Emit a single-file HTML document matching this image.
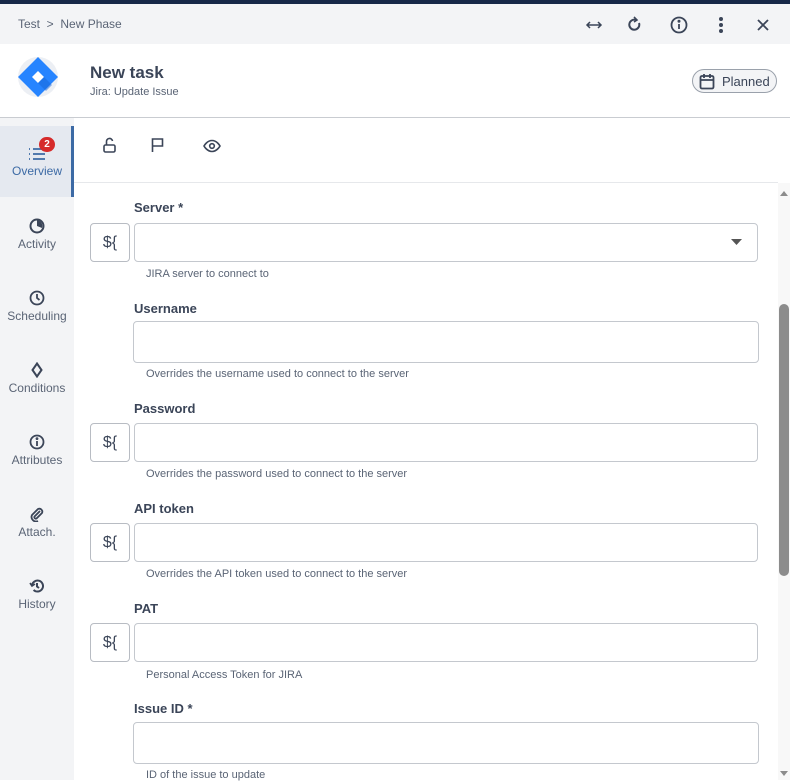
<!DOCTYPE html>
<html><head><style>
*{box-sizing:border-box;margin:0;padding:0}
body{width:790px;height:780px;overflow:hidden;font-family:"Liberation Sans",sans-serif;background:#fff;position:relative;color:#3b4558}
.a{position:absolute}
.top{left:0;top:0;width:790px;height:4px;background:#172848}
.bar{left:0;top:4px;width:790px;height:40px;background:#f3f4f6}
.crumb{left:18px;top:17px;font-size:12px;color:#5a6475}
.hdr{left:0;top:117px;width:790px;height:1px;background:#c9ccd1}
.side{left:0;top:118px;width:74px;height:662px;background:#f3f4f6}
.nav{position:absolute;left:0;width:74px;text-align:center;font-size:12px;color:#5a6475}
.nav svg{display:block;margin:0 auto 3px}
.lbl{position:absolute;left:134px;font-size:13px;font-weight:bold;color:#3b4558}
.inp{position:absolute;left:134px;width:624px;border:1px solid #c4c8ce;border-radius:4px;background:#fff}
.btn{position:absolute;left:90px;width:40px;height:39px;border:1px solid #b8bcc3;border-radius:4px;font-size:16px;text-align:center;line-height:37px;color:#3b4558}
.help{position:absolute;left:146px;font-size:11px;color:#5a6475}
</style></head><body>
<div class="a top"></div>
<div class="a bar"></div>
<div class="a crumb">Test&nbsp; &gt;&nbsp; New Phase</div>
<svg class="a" style="left:585px;top:17px" width="18" height="16" viewBox="0 0 18 16" fill="none" stroke="#3b4558" stroke-width="1.5"><path d="M2 8h14M5 5L2 8l3 3M13 5l3 3-3 3"/></svg>
<svg class="a" style="left:627px;top:16px" width="16" height="18" viewBox="0 0 16 18" fill="none" stroke="#3b4558" stroke-width="2"><path d="M12 7a5 5 0 1 1-3-3"/><path d="M7 1l3 3-3 2" stroke-width="1.6"/></svg>
<svg class="a" style="left:670px;top:16px" width="18" height="18" viewBox="0 0 18 18" fill="none" stroke="#3b4558" stroke-width="1.8"><circle cx="9" cy="9" r="7.5"/><path d="M9 8v5"/><circle cx="9" cy="5.3" r=".6" fill="#3b4558"/></svg>
<svg class="a" style="left:718px;top:16px" width="6" height="18"><circle cx="3" cy="3" r="2" fill="#3b4558"/><circle cx="3" cy="9" r="2" fill="#3b4558"/><circle cx="3" cy="15" r="2" fill="#3b4558"/></svg>
<svg class="a" style="left:757px;top:19px" width="12" height="12" stroke="#3b4558" stroke-width="1.8"><path d="M1 1l10 10M11 1L1 11"/></svg>
<div class="a" style="left:18px;top:57px;width:40px;height:40px;border-radius:50%;background:#eceff4"></div>
<svg class="a" style="left:18px;top:57px" width="40" height="40" viewBox="0 0 40 40"><path d="M20 0L40 20 20 40 0 20z" fill="#2684ff"/><path d="M20 14l6 6-6 6-6-6z" fill="#fff"/><path d="M20 26l6-6 8 8-6 6z" fill="#1565d8" opacity=".5"/></svg>
<div class="a" style="left:90px;top:63px;font-size:17px;font-weight:bold;color:#3b4558">New task</div>
<div class="a" style="left:90px;top:86px;font-size:11px;color:#5a6475">Jira: Update Issue</div>
<div class="a" style="left:692px;top:69px;width:85px;height:24px;border:1px solid #9aa1ab;border-radius:12px;background:#f3f4f6;font-size:13px;color:#3b4558;padding:4px 0 0 29px">Planned</div>
<svg class="a" style="left:699px;top:73px" width="16" height="17" viewBox="0 0 16 17" fill="none" stroke="#3b4558" stroke-width="1.8"><rect x="1.5" y="3" width="13" height="12.5" rx="1.5"/><path d="M1.5 7h13M5 1v4M11 1v4"/></svg>
<div class="a hdr"></div>
<div class="a side"></div>
<div class="a" style="left:0;top:126px;width:74px;height:71px;background:#e5e9f0;border-right:3px solid #3c6aa5"></div>
<div class="nav" style="top:147px;color:#3c6aa5"><svg width="18" height="14" viewBox="0 0 18 14" stroke="#3c6aa5" stroke-width="1.8"><path d="M5 2h12M5 7h12M5 12h12M1 2h1M1 7h1M1 12h1"/></svg>Overview</div>
<div class="a" style="left:39px;top:137px;width:16px;height:15px;border-radius:8px;background:#d62b2b;color:#fff;font-size:10px;font-weight:bold;text-align:center;line-height:15px">2</div>
<div class="nav" style="top:218px"><svg width="16" height="16" viewBox="0 0 16 16"><circle cx="8" cy="8" r="6.5" fill="none" stroke="#3b4558" stroke-width="2"/><path d="M8 8V2a6 6 0 0 1 5 8z" fill="#3b4558"/></svg>Activity</div>
<div class="nav" style="top:290px"><svg width="16" height="16" viewBox="0 0 16 16" fill="none" stroke="#3b4558" stroke-width="1.8"><circle cx="8" cy="8" r="6.5"/><path d="M8 4v4l2.5 2"/></svg>Scheduling</div>
<div class="nav" style="top:362px"><svg width="14" height="16" viewBox="0 0 14 16" fill="none" stroke="#3b4558" stroke-width="2"><path d="M7 1.5l4.5 6.5L7 14.5 2.5 8z"/></svg>Conditions</div>
<div class="nav" style="top:434px"><svg width="16" height="16" viewBox="0 0 16 16" fill="none" stroke="#3b4558" stroke-width="1.8"><circle cx="8" cy="8" r="6.5"/><path d="M8 7v5"/><circle cx="8" cy="4.6" r=".5" fill="#3b4558"/></svg>Attributes</div>
<div class="nav" style="top:506px"><svg width="16" height="16" viewBox="0 0 16 16" fill="none" stroke="#3b4558" stroke-width="1.8"><path d="M11 5L5.5 10.5a1.5 1.5 0 0 0 2 2L13 7a3 3 0 0 0-4-4L3 9a4.5 4.5 0 0 0 6 6"/></svg>Attach.</div>
<div class="nav" style="top:578px"><svg width="16" height="16" viewBox="0 0 16 16" fill="none" stroke="#3b4558" stroke-width="2"><path d="M3 8a5.5 5.5 0 1 1 1.6 3.9"/><path d="M1 5l2 3 3-2" stroke-width="1.6"/><path d="M8 5v3.5l2 1.5"/></svg>History</div>
<svg class="a" style="left:102px;top:136px" width="16" height="18" viewBox="0 0 16 18" fill="none" stroke="#3b4558" stroke-width="1.6"><rect x="2" y="9" width="11" height="7" rx="1.5"/><path d="M4.5 9V6a3 3 0 0 1 6-1"/></svg>
<svg class="a" style="left:150px;top:137px" width="16" height="16" viewBox="0 0 16 16" fill="none" stroke="#3b4558" stroke-width="1.6"><path d="M2.5 15V2h10v7h-10"/></svg>
<svg class="a" style="left:203px;top:139px" width="18" height="14" viewBox="0 0 18 14" fill="none" stroke="#3b4558" stroke-width="1.6"><path d="M1 7s3-5.5 8-5.5S17 7 17 7s-3 5.5-8 5.5S1 7 1 7z"/><circle cx="9" cy="7" r="2.3"/></svg>
<div class="a" style="left:74px;top:182px;width:704px;height:1px;background:#e6e8eb"></div>
<div class="a" style="left:778px;top:183px;width:12px;height:597px;background:#f8f8f8"></div>
<div class="a" style="left:779px;top:304px;width:10px;height:272px;border-radius:5px;background:#8c8c8c"></div>
<svg class="a" style="left:779px;top:189px" width="10" height="8"><path d="M1 7L5 2l4 5z" fill="#8c8c8c"/></svg>
<svg class="a" style="left:779px;top:770px" width="10" height="8"><path d="M1 1L5 6l4-5z" fill="#8c8c8c"/></svg>

<div class="lbl" style="top:200px">Server *</div>
<div class="btn" style="top:223px">${</div>
<div class="inp" style="top:223px;height:39px"></div>
<svg class="a" style="left:731px;top:239px" width="12" height="7"><path d="M0 0h11L5.5 6z" fill="#555"/></svg>
<div class="help" style="top:268px">JIRA server to connect to</div>

<div class="lbl" style="top:301px">Username</div>
<div class="inp" style="top:321px;height:42px;left:133px;width:626px"></div>
<div class="help" style="top:368px">Overrides the username used to connect to the server</div>

<div class="lbl" style="top:401px">Password</div>
<div class="btn" style="top:423px">${</div>
<div class="inp" style="top:423px;height:39px"></div>
<div class="help" style="top:468px">Overrides the password used to connect to the server</div>

<div class="lbl" style="top:501px">API token</div>
<div class="btn" style="top:523px">${</div>
<div class="inp" style="top:523px;height:39px"></div>
<div class="help" style="top:568px">Overrides the API token used to connect to the server</div>

<div class="lbl" style="top:601px">PAT</div>
<div class="btn" style="top:623px">${</div>
<div class="inp" style="top:623px;height:39px"></div>
<div class="help" style="top:669px">Personal Access Token for JIRA</div>

<div class="lbl" style="top:701px">Issue ID *</div>
<div class="inp" style="top:722px;height:42px;left:133px;width:626px"></div>
<div class="help" style="top:769px">ID of the issue to update</div>
</body></html>
